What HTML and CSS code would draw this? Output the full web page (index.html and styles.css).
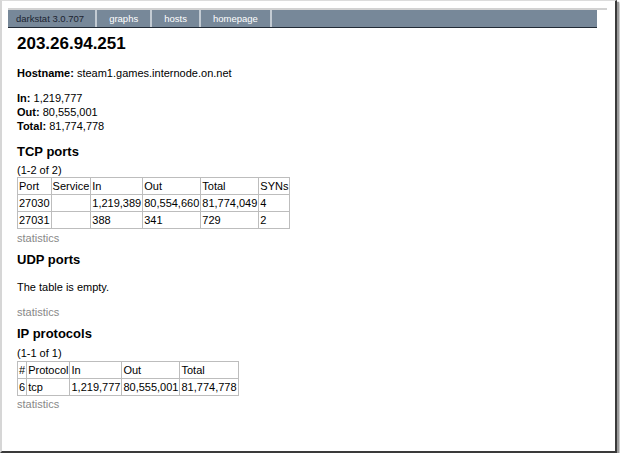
FILE: index.html
```html
<!DOCTYPE html>
<html lang="en">
<head>
  <meta charset="UTF-8" />
  <title>darkstat 3.0.707 : host 203.26.94.251</title>
  <link rel="stylesheet" href="styles.css">
</head>
<body>

  <div class="window">
    <div class="menu-wrap">
      <div class="menu">
        <span class="title">darkstat 3.0.707</span>
        <a href="#">graphs</a>
        <a href="#">hosts</a>
        <a href="#">homepage</a>
      </div>
    </div>

    <div class="content">
      <h1>203.26.94.251</h1>

      <p class="hostname"><b>Hostname:</b> steam1.games.internode.on.net</p>

      <p class="totals">
        <b>In:</b> 1,219,777<br>
        <b>Out:</b> 80,555,001<br>
        <b>Total:</b> 81,774,778
      </p>

      <h2>TCP ports</h2>
      <div class="count">(1-2 of 2)</div>
      <table>
        <tr><td>Port</td><td>Service</td><td>In</td><td>Out</td><td>Total</td><td>SYNs</td></tr>
        <tr><td>27030</td><td></td><td>1,219,389</td><td>80,554,660</td><td>81,774,049</td><td>4</td></tr>
        <tr><td>27031</td><td></td><td>388</td><td>341</td><td>729</td><td>2</td></tr>
      </table>
      <a class="stats" href="#">statistics</a>

      <h2 class="udp">UDP ports</h2>
      <p class="empty">The table is empty.</p>
      <a class="stats stats-empty" href="#">statistics</a>

      <h2 class="ip">IP protocols</h2>
      <div class="count count-ip">(1-1 of 1)</div>
      <table class="ip-table">
        <tr><td>#</td><td>Protocol</td><td>In</td><td>Out</td><td>Total</td></tr>
        <tr><td>6</td><td>tcp</td><td>1,219,777</td><td>80,555,001</td><td>81,774,778</td></tr>
      </table>
      <a class="stats stats-ip" href="#">statistics</a>
    </div>
  </div>

</body>
</html>
```

FILE: styles.css
```css
* {
  box-sizing: border-box;
  margin: 0;
  padding: 0;
}

html {
  background: #fff;
}

body {
  font-family: "Liberation Sans", Arial, sans-serif;
  font-size: 11px;
  line-height: 14px;
  color: #000;
}

/* window frame with its drop shadow */
.window {
  width: 617px;
  height: 453px;
  background: #fff;
  border-top: 1px solid #dcdcdc;
  border-left: 2px solid #d6d6d6;
  border-right: 2px solid #3a3a3a;
  border-bottom: 2px solid #3a3a3a;
  box-shadow: 2px 2px 1px #9a9a9a, 3px 3px 2px #c4c4c4;
}

/* top menu */
.menu-wrap {
  margin: 7px 0 0 6px;
  width: 599px;
  border-top: 2px solid #d2d2d2;
}

.menu {
  display: flex;
  height: 18px;
  margin-right: 10px;
  background: #778899;
  border-bottom: 1px solid #222b36;
  font-size: 9.5px;
  line-height: 17px;
}

.menu .title,
.menu a {
  border-right: 2px solid #c3cbd3;
  color: #fff;
  text-decoration: none;
}

.menu .title {
  padding: 0 11px 0 8px;
  color: #1c2430;
}

.menu a {
  padding: 0 12px;
}

.content {
  padding-left: 15px;
}

h1 {
  margin-top: 6px;
  font-size: 17px;
  line-height: 20px;
  font-weight: bold;
}

h2 {
  margin-top: 11px;
  font-size: 13px;
  line-height: 16px;
  font-weight: bold;
}

.hostname {
  margin-top: 12px;
}

.totals {
  margin-top: 11px;
}

.count {
  margin-top: 3px;
}

table {
  border-collapse: collapse;
  border: 1px solid #bdbdbd;
}

td {
  border: 1px solid #bdbdbd;
  padding: 2px 1px 1px;
  line-height: 13px;
  white-space: nowrap;
}

.stats {
  display: block;
  margin-top: 2px;
  color: #888;
  text-decoration: none;
}

.udp {
  margin-top: 7px;
}

.empty {
  margin-top: 12px;
}

.stats-empty {
  margin-top: 11px;
}

.ip {
  margin-top: 7px;
}

.count-ip {
  margin-top: 4px;
}

.ip-table {
  margin-top: 1px;
}

.stats-ip {
  margin-top: 1px;
}
```
